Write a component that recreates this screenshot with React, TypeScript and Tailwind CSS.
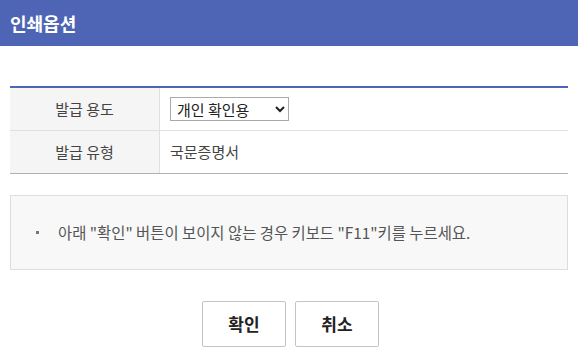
export default function App() {
  return (
    <div className="w-[578px] h-[360px] bg-white font-['Noto_Sans_CJK_KR','Noto_Sans',sans-serif] text-[#333]">
      <div className="h-[46px] bg-[#4d65b4] flex items-center px-[10px]">
        <h1 className="text-white text-[18px] font-bold">인쇄옵션</h1>
      </div>

      <div className="px-[10px] pt-[40px]">
        {/* Options table */}
        <div className="border-t-2 border-[#4d65b4] border-b border-b-[#b0b0b0]">
          <div className="flex h-[43px] border-b border-[#e0e0e0]">
            <div className="w-[150px] bg-[#f5f5f5] border-r border-[#e0e0e0] flex items-center justify-center text-[15px] text-[#444]">
              발급 용도
            </div>
            <div className="flex items-center pl-[10px]">
              <select className="w-[119px] h-[24px] border border-[#aaa] text-[15px] text-[#222] px-[2px] bg-white">
                <option>개인 확인용</option>
              </select>
            </div>
          </div>
          <div className="flex h-[42px]">
            <div className="w-[150px] bg-[#f5f5f5] border-r border-[#e0e0e0] flex items-center justify-center text-[15px] text-[#444]">
              발급 유형
            </div>
            <div className="flex items-center pl-[10px] text-[15px] text-[#444]">국문증명서</div>
          </div>
        </div>

        {/* Notice */}
        <div className="mt-[21px] h-[75px] bg-[#f8f8f8] border border-[#dddddd] flex items-center pl-[25px] pr-2 text-[15.4px] text-[#555]">
          <span className="w-[3px] h-[3px] bg-[#777] mr-[19px]" />
          <p>아래 "확인" 버튼이 보이지 않는 경우 키보드 "F11"키를 누르세요.</p>
        </div>

        {/* Buttons */}
        <div className="mt-[31px] flex justify-center gap-[9px] pl-[3px]">
          <button className="w-[84px] h-[46px] border border-[#c4c4c4] rounded-[2px] bg-white text-[17px] font-bold text-[#222]">
            확인
          </button>
          <button className="w-[84px] h-[46px] border border-[#c4c4c4] rounded-[2px] bg-white text-[17px] font-bold text-[#222]">
            취소
          </button>
        </div>
      </div>
    </div>
  );
}
